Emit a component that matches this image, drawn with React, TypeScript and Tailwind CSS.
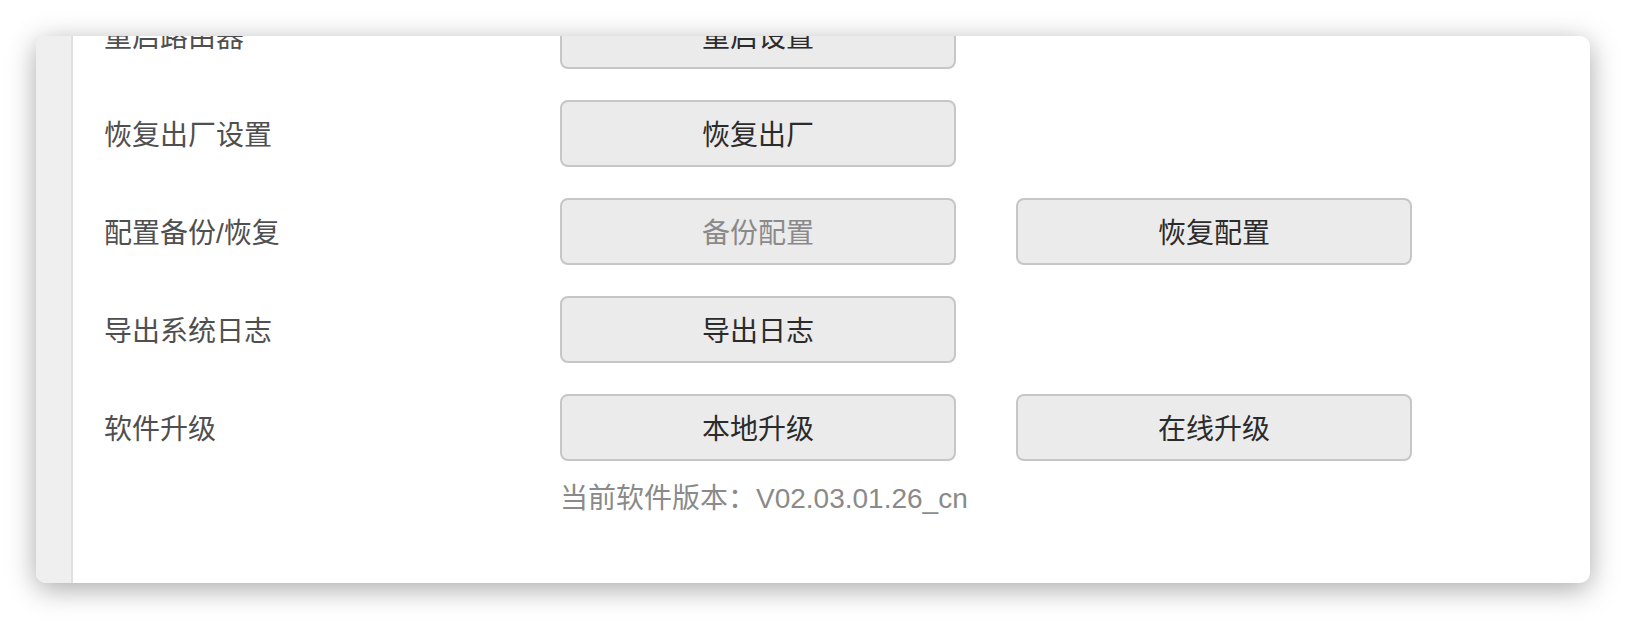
import React from "react";

const font = { fontFamily: '"Helvetica Neue", "Liberation Sans", "Noto Sans CJK SC", sans-serif' };

type Row = {
  label: string;
  buttons: { text: string; disabled?: boolean }[];
  note?: string;
};

const rows: Row[] = [
  { label: "重启路由器", buttons: [{ text: "重启设置" }] },
  { label: "恢复出厂设置", buttons: [{ text: "恢复出厂" }] },
  { label: "配置备份/恢复", buttons: [{ text: "备份配置", disabled: true }, { text: "恢复配置" }] },
  { label: "导出系统日志", buttons: [{ text: "导出日志" }] },
  {
    label: "软件升级",
    buttons: [{ text: "本地升级" }, { text: "在线升级" }],
    note: "当前软件版本：V02.03.01.26_cn",
  },
];

function Btn({ text, disabled }: { text: string; disabled?: boolean }) {
  return (
    <button
      className={
        "w-[396px] h-[67px] pt-[5px] rounded-[8px] border-2 border-[#c6c6c6] bg-[#ebebeb] text-[28px] leading-none " +
        (disabled ? "text-[#8a8a8a]" : "text-[#2b2b2b]")
      }
    >
      {text}
    </button>
  );
}

export default function App() {
  return (
    <div className="w-[1626px] h-[620px] bg-white pt-[36px] pl-[36px] overflow-hidden" style={font}>
      <div className="w-[1554px] h-[547px] bg-white rounded-[10px] shadow-[0_6px_28px_rgba(0,0,0,0.34)] overflow-hidden flex">
        {/* side strip */}
        <div className="w-[37px] shrink-0 bg-[#efefef] border-r-2 border-[#e0e0e0]" />

        <div className="flex-1 pl-[31px] mt-[-34px]">
          <div className="flex flex-col gap-[31px]">
            {rows.map((row) => (
              <div key={row.label} className="flex items-start">
                <div className="w-[456px] h-[67px] pt-[5px] flex items-center text-[28px] text-[#4f4f4f]">
                  {row.label}
                </div>
                <div className="flex flex-col">
                  <div className="flex gap-[60px]">
                    {row.buttons.map((b) => (
                      <Btn key={b.text} text={b.text} disabled={b.disabled} />
                    ))}
                  </div>
                  {row.note && (
                    <div className="mt-[15px] h-[40px] pt-[5px] flex items-center text-[28px] text-[#8a8a8a]">
                      {row.note}
                    </div>
                  )}
                </div>
              </div>
            ))}
          </div>
        </div>
      </div>
    </div>
  );
}
